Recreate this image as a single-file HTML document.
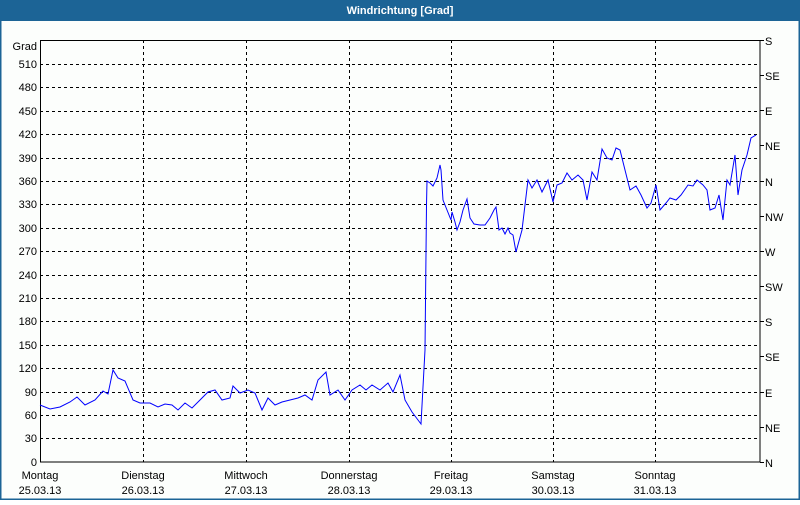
<!DOCTYPE html>
<html><head><meta charset="utf-8"><style>
body{margin:0;width:800px;height:500px;overflow:hidden;background:#fff;font-family:"Liberation Sans",sans-serif}
</style></head><body>
<svg width="800" height="500" xmlns="http://www.w3.org/2000/svg" font-family="Liberation Sans, sans-serif" font-size="11">
<rect x="0" y="0" width="800" height="500" fill="#fcfefc"/>
<rect x="0" y="0" width="800" height="21" fill="#1c6496"/>
<rect x="0" y="0" width="1.5" height="500" fill="#1c6496"/>
<rect x="0" y="498.5" width="800" height="1.5" fill="#1c6496"/>
<rect x="798.5" y="0" width="1.5" height="500" fill="#1c6496"/>
<text x="400" y="14" fill="#fff" font-weight="bold" text-anchor="middle">Windrichtung [Grad]</text>
<g stroke="#000" stroke-width="1" stroke-dasharray="3,3" fill="none">
<path d="M40 64.5H760M40 87.5H760M40 111.5H760M40 134.5H760M40 158.5H760M40 181.5H760M40 204.5H760M40 228.5H760M40 251.5H760M40 275.5H760M40 298.5H760M40 321.5H760M40 345.5H760M40 368.5H760M40 392.5H760M40 415.5H760M40 438.5H760"/>
<path d="M143.5 40V462M246.5 40V462M349.5 40V462M451.5 40V462M553.5 40V462M655.5 40V462"/>
</g>
<rect x="40.5" y="40.5" width="719.5" height="421.5" fill="none" stroke="#000"/>
<g stroke="#000"><path d="M760 40.5h4M760 75.5h4M760 110.5h4M760 145.5h4M760 181.5h4M760 216.5h4M760 251.5h4M760 286.5h4M760 321.5h4M760 356.5h4M760 392.5h4M760 427.5h4M760 462.5h4"/></g>
<g text-anchor="end">
<text x="37" y="50">Grad</text>
<text x="37" y="68">510</text><text x="37" y="91">480</text><text x="37" y="115">450</text><text x="37" y="138">420</text><text x="37" y="162">390</text><text x="37" y="185">360</text><text x="37" y="208">330</text><text x="37" y="232">300</text><text x="37" y="255">270</text><text x="37" y="279">240</text><text x="37" y="302">210</text><text x="37" y="325">180</text><text x="37" y="349">150</text><text x="37" y="372">120</text><text x="37" y="396">90</text><text x="37" y="419">60</text><text x="37" y="442">30</text><text x="37" y="466">0</text>
</g>
<g>
<text x="765" y="45">S</text><text x="765" y="80">SE</text><text x="765" y="115">E</text><text x="765" y="150">NE</text><text x="765" y="186">N</text><text x="765" y="221">NW</text><text x="765" y="256">W</text><text x="765" y="291">SW</text><text x="765" y="326">S</text><text x="765" y="361">SE</text><text x="765" y="397">E</text><text x="765" y="432">NE</text><text x="765" y="467">N</text>
</g>
<g text-anchor="middle">
<text x="40" y="479">Montag</text><text x="40" y="494">25.03.13</text>
<text x="143" y="479">Dienstag</text><text x="143" y="494">26.03.13</text>
<text x="246" y="479">Mittwoch</text><text x="246" y="494">27.03.13</text>
<text x="349" y="479">Donnerstag</text><text x="349" y="494">28.03.13</text>
<text x="451" y="479">Freitag</text><text x="451" y="494">29.03.13</text>
<text x="553" y="479">Samstag</text><text x="553" y="494">30.03.13</text>
<text x="655" y="479">Sonntag</text><text x="655" y="494">31.03.13</text>
</g>
<polyline fill="none" stroke="#0000ff" stroke-width="1" points="40,405 50,409 60,407 70,402 77,397 85,405 95,400 103,391 108,394 113,370 118,378 125,381 133,400 140,403 150,403 158,407 165,404 172,405 178,410 185,403 192,408 200,400 208,392 215,390 222,400 230,398 233,386 240,393 248,390 255,393 262,410 268,398 275,405 282,402 290,400 298,398 305,395 312,400 318,380 326,372 330,395 338,390 345,400 352,390 360,385 366,390 372,385 380,390 388,383 393,392 400,375 405,400 412,412 418,420 421,424 425,350 426.5,205 427,181 430,183 433,186 437,178 440,165 441,170 443,200 447,210 451,220 452,212 455,222 457,230 460,222 463,210 467,199 470,218 474,224 480,225 485,225 490,218 494,210 496,207 499,230 502,228 505,234 508,228 510,233 513,235 516,252 522,230 528,180 532,188 537,180 542,192 548,180 553,202 557,185 562,183 567,173 572,180 578,175 583,180 587,200 592,172 597,180 602,149 607,158 612,160 616,148 620,150 625,170 630,190 636,186 641,195 647,208 651,203 656,185 660,210 666,203 670,198 676,200 681,195 688,185 693,186 697,180 703,185 707,190 710,210 715,208 719,195 723,220 727,180 730,185 735,155 738,195 742,170 747,155 751,138 756,135"/>
</svg>
</body></html>
